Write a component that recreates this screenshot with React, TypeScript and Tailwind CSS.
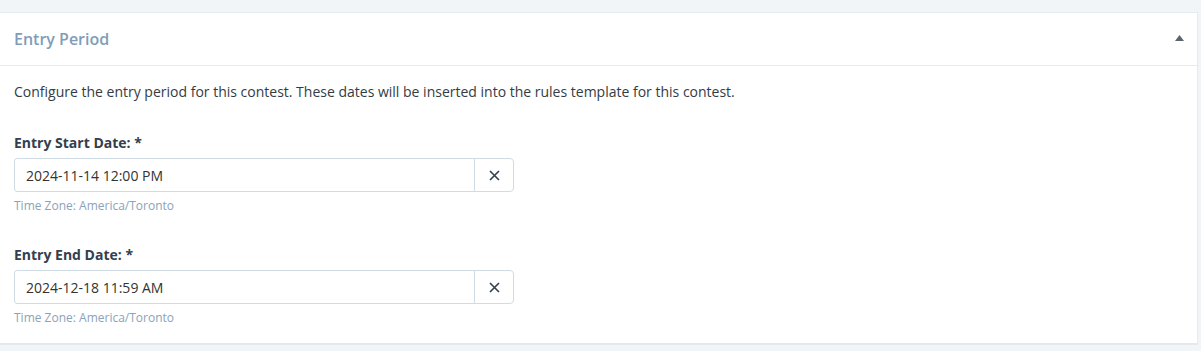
import React from 'react';

const fields = [
    { label: 'Entry Start Date:', value: '2024-11-14 12:00 PM' },
    { label: 'Entry End Date:', value: '2024-12-18 11:59 AM' },
];

const DateField: React.FC<{ label: string; value: string }> = ({ label, value }) => (
    <div>
        <label className="block text-[14px] leading-5 font-bold text-[#33404d]">{label} *</label>
        <div className="mt-[5px] flex w-[500px]">
            <input
                readOnly
                value={value}
                className="h-[34px] flex-1 border border-[#cfdbe5] rounded-l-[3px] px-[11px] text-[14px] text-[#333] bg-white outline-none"
            />
            <button className="h-[34px] w-[40px] -ml-px flex items-center justify-center border border-[#cfdbe5] rounded-r-[4px] bg-white text-[#34404c]">
                <svg width="11" height="11" viewBox="0 0 11 11" fill="none" stroke="currentColor" strokeWidth="1.6">
                    <path d="M1 1 L10 10 M10 1 L1 10" />
                </svg>
            </button>
        </div>
        <p className="mt-[6px] text-[12px] leading-4 text-[#8aa3ba]">Time Zone: America/Toronto</p>
    </div>
);

export default function App() {
    return (
        <div className="min-h-[351px] bg-[#f1f5f8] pt-3 pr-[3px] font-['Open_Sans',sans-serif]">
            <div className="bg-white border-t border-r border-[#e6ebf0] border-b-2 border-b-[#e3e9ee]">
                {/* Header */}
                <div className="h-[53px] flex items-center justify-between pl-[14px] pr-[13px] border-b border-[#e6ebf0]">
                    <h2 className="text-[16px] font-semibold text-[#7f9db7]">Entry Period</h2>
                    <svg width="9" height="6" viewBox="0 0 9 6" className="mt-[-2px]">
                        <path d="M4.5 0 L9 6 L0 6 Z" fill="#5a6570" />
                    </svg>
                </div>

                {/* Body */}
                <div className="px-[14px] pt-4 pb-[17px]">
                    <p className="text-[14px] leading-5 text-[#333c45]">
                        Configure the entry period for this contest. These dates will be inserted into the rules template for this contest.
                    </p>
                    <div className="mt-[31px] flex flex-col gap-[31px]">
                        {fields.map(f => (
                            <DateField key={f.label} label={f.label} value={f.value} />
                        ))}
                    </div>
                </div>
            </div>
        </div>
    );
}
